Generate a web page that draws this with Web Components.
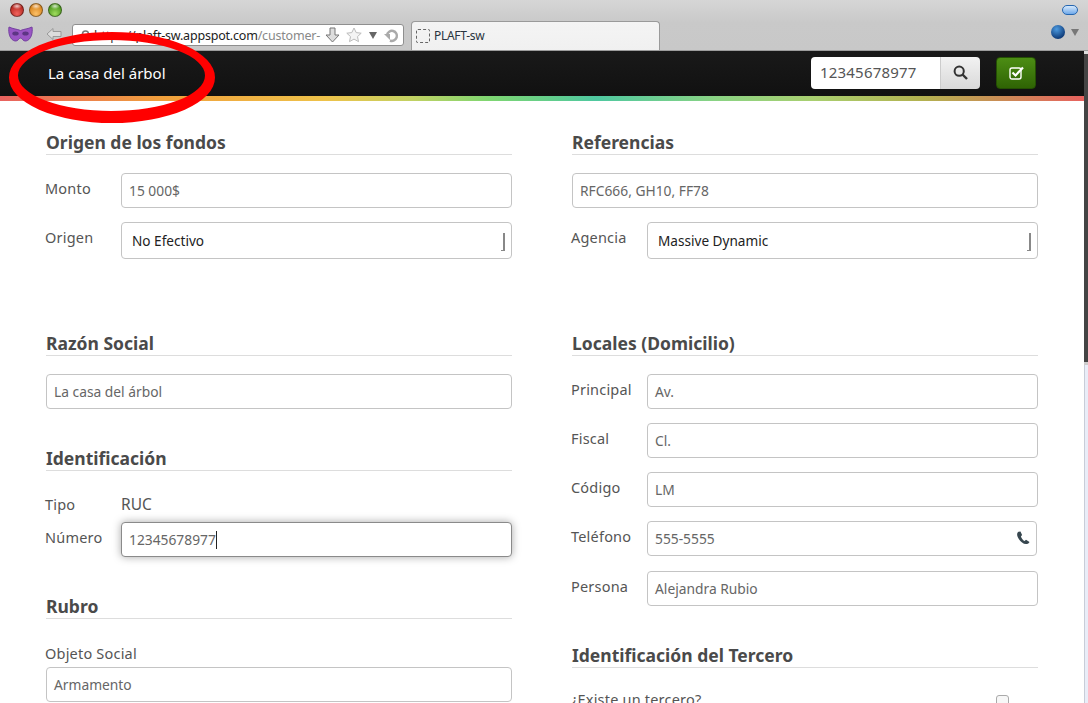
<!DOCTYPE html>
<html>
<head>
<meta charset="utf-8">
<title>PLAFT-sw</title>
<style>
  html, body { margin: 0; padding: 0; background: #fff; overflow: hidden; height: 703px; }
  body { font-family: "Noto Sans", "Open Sans", sans-serif; color: #555; }
</style>
</head>
<body>
<browser-chrome></browser-chrome>
<page-area>
<app-navbar title-text="La casa del árbol" search="12345678977"></app-navbar>
<form-page>
  <form-section slot="left" heading="Origen de los fondos">
    <form-field label="Monto" value="15 000$"></form-field>
    <form-field label="Origen" value="No Efectivo" kind="select"></form-field>
  </form-section>
  <form-section slot="right" heading="Referencias">
    <form-field value="RFC666, GH10, FF78"></form-field>
    <form-field label="Agencia" value="Massive Dynamic" kind="select"></form-field>
  </form-section>

  <form-section slot="left" heading="Razón Social" top="74">
    <form-field value="La casa del árbol"></form-field>
  </form-section>
  <form-section slot="left" heading="Identificación" top="39">
    <form-field label="Tipo" value="RUC" kind="static"></form-field>
    <form-field label="Número" value="12345678977" kind="focus"></form-field>
  </form-section>
  <form-section slot="left" heading="Rubro" top="39">
    <form-field label="Objeto Social" value="Armamento" kind="stacked"></form-field>
  </form-section>

  <form-section slot="right" heading="Locales (Domicilio)" top="74">
    <form-field label="Principal" value="Av."></form-field>
    <form-field label="Fiscal" value="Cl."></form-field>
    <form-field label="Código" value="LM"></form-field>
    <form-field label="Teléfono" value="555-5555" kind="phone"></form-field>
    <form-field label="Persona" value="Alejandra Rubio" style="margin-top:1px"></form-field>
  </form-section>
  <form-section slot="right" heading="Identificación del Tercero" top="39">
    <form-field label="¿Existe un tercero?" kind="check"></form-field>
  </form-section>
</form-page>
</page-area>
<red-mark></red-mark>

<script>
class BrowserChrome extends HTMLElement {
  constructor() {
    super();
    this.attachShadow({ mode: "open" });
    this.shadowRoot.innerHTML = `
    <style>
    :host { display:block; height:51px; box-sizing:border-box; background:linear-gradient(#d6d6d6,#c9c9c9 45%,#c8c8c8); border-bottom:1px solid #9c9c9c; overflow:hidden; font-family:"Noto Sans",sans-serif; }
    #lights { display:flex; gap:5px; height:21px; padding:3px 0 0 10px; box-sizing:border-box; align-items:flex-start; }
    #lights i { width:12px; height:12px; border-radius:50%; border:1px solid rgba(0,0,0,.4); box-sizing:content-box; }
    #row { display:flex; align-items:flex-start; height:30px; position:relative; }
    #mask { margin:4px 0 0 8px; width:25px; height:19px; }
    #back { margin:6px 0 0 13px; width:16px; height:14px; }
    #url { margin:3px 0 0 10px; width:332px; height:22px; box-sizing:border-box; background:#fff; border:1px solid #8f8f8f; border-radius:3px; display:flex; align-items:center; font-size:12.500px; padding-left:8px; white-space:nowrap; color:#333; letter-spacing:-.2px; position:relative; }
    #url span { color:#888; }
    #url b { font-weight:normal; flex:1; overflow:hidden; margin-left:4px; }
    #url svg { flex:none; }
    #tab { margin:0 0 0 7px; width:249px; height:30px; box-sizing:border-box; background:linear-gradient(#f4f4f4,#f0f0f0); border:1px solid #9a9a9a; border-bottom:0; border-radius:4px 4px 0 0; display:flex; align-items:center; gap:4px; padding:0 0 2px 4px; font-size:12px; color:#2a3440; letter-spacing:-.3px; }
    #tab i { width:12px; height:12px; border:1px dashed #666; border-radius:2px; }
    #end { margin-left:auto; display:flex; align-items:center; gap:6px; padding:4px 9px 0 0; }
    #pill { position:absolute; top:-16px; right:10px; width:14px; height:8px; border-radius:5px; border:1px solid #2566b0; background:linear-gradient(#d7e9fb,#6fa9ea); }
    #globe { width:14px; height:14px; border-radius:50%; background:radial-gradient(circle at 40% 30%,#4d9be0,#12407e 70%,#0c2a55); }
    #arrow { width:0; height:0; border:4px solid transparent; border-top:7px solid #777; border-bottom:0; }
    </style>
    <div id="lights">
      <i style="background:radial-gradient(ellipse 5px 3px at 50% 18%,rgba(255,255,255,.75),transparent),radial-gradient(circle at 50% 80%,#f0625c,#b82a22 70%)"></i>
      <i style="background:radial-gradient(ellipse 5px 3px at 50% 18%,rgba(255,255,255,.75),transparent),radial-gradient(circle at 50% 80%,#fbc068,#d9861f 70%)"></i>
      <i style="background:radial-gradient(ellipse 5px 3px at 50% 18%,rgba(255,255,255,.75),transparent),radial-gradient(circle at 50% 80%,#9fdc5e,#4f9a20 70%)"></i>
    </div>
    <div id="row">
      <svg id="mask" viewBox="0 0 25 19"><path d="M1 2c4 2 8 2 11.500 3.500C16 4 20 4 24 2c1 6-1 13-6 14-3 .5-4-3-5.500-3S10 16.500 7 16C2 15 0 8 1 2z" fill="#9a55c4" stroke="#7440a0"/><ellipse cx="7.500" cy="8.500" rx="3.200" ry="2" fill="#5e3585"/><ellipse cx="17.500" cy="8.500" rx="3.200" ry="2" fill="#5e3585"/></svg>
      <svg id="back" viewBox="0 0 16 14"><path d="M1 7l6-5.500V4.500h8v5H7v3z" fill="#ddd" stroke="#999"/></svg>
      <div id="url">
        <svg width="9" height="10" viewBox="0 0 9 10"><circle cx="4.500" cy="4" r="3" fill="none" stroke="#777" stroke-width="1.600"/><path d="M6.500 6.500L8.500 9.500" stroke="#777" stroke-width="1.600"/></svg>
        <b>https://<span style="color:#222">plaft-sw.appspot.com</span><span>/customer-</span></b>
        <svg width="15" height="16" viewBox="0 0 15 16" style="margin-right:6px"><path d="M5 1h5v7h4l-6.500 7L1 8h4z" fill="#ddd" stroke="#777"/></svg>
        <svg width="16" height="16" viewBox="0 0 16 16" style="margin-right:6px"><path d="M8 1l2.200 4.600 5 .6-3.700 3.400 1 5L8 12.100 3.500 14.600l1-5L.8 6.200l5-.6z" fill="#f4f4f4" stroke="#bbb"/></svg>
        <svg width="10" height="8" viewBox="0 0 10 8" style="margin-right:6px"><path d="M1 1h8L5 8z" fill="#666"/></svg>
        <svg width="15" height="15" viewBox="0 0 15 15" style="margin-right:4px"><path d="M3 7a5 5 0 1 1 3 5.500" fill="none" stroke="#aaa" stroke-width="2.500"/><path d="M0 6h6v6z" fill="#aaa"/></svg>
      </div>
      <div id="tab"><i></i><slot name="tab">PLAFT-sw</slot></div>
      <div id="end"><i id="globe"></i><i id="arrow"></i></div>
      <i id="pill"></i>
    </div>
    `;
  }
}

// content area plus the thin overlay-style scrollbar on its right side
class PageArea extends HTMLElement {
  constructor() {
    super();
    this.attachShadow({ mode: "open" });
    this.shadowRoot.innerHTML = `
    <style>
    :host { display:flex; height:652px; overflow:hidden; }
    #main { flex:1; min-width:0; }
    #track { width:4px; flex:none; display:flex; flex-direction:column; background:#e9edf8; box-shadow:inset 1px 0 0 #c8cdd8; }
    #thumb { height:314px; background:#444; border-top:3px solid #ddd; border-bottom:3px solid #ccc; box-sizing:border-box; }
    </style>
    <div id="main"><slot></slot></div>
    <div id="track"><div id="thumb"></div></div>
    `;
  }
}

class AppNavbar extends HTMLElement {
  constructor() {
    super();
    this.attachShadow({ mode: "open" });
    this.shadowRoot.innerHTML = `
    <style>
    :host { display:block; font-family:"Noto Sans",sans-serif; }
    #bar { height:45px; background:linear-gradient(#191919,#111); display:flex; align-items:center; padding:0 48px 0 48px; box-sizing:border-box; }
    #brand { color:#fff; font-size:15px; margin-top:-1px; }
    #search { margin-left:auto; display:flex; height:32px; margin-top:-2px; }
    #q { width:130px; box-sizing:border-box; background:#fff; border-radius:4px 0 0 4px; font-size:15px; color:#555; padding-left:9px; line-height:31px; letter-spacing:.2px; border-right:1px solid #ccc; }
    #go { width:39px; background:linear-gradient(#f2f2f2,#d9d9d9); border-radius:0 4px 4px 0; display:flex; align-items:center; justify-content:center; }
    #ok { width:40px; height:32px; margin-left:16px; margin-top:-2px; box-sizing:border-box; background:linear-gradient(#4c8d14,#2f6404); border:1px solid #245003; border-radius:4px; display:flex; align-items:center; justify-content:center; }
    #rainbow { height:5px; background:linear-gradient(90deg,#e8625f 0,#f0a03c 15%,#eec24a 30%,#c2d163 38%,#7fd671 45%,#4fc8a0 55%,#8ad384 66%,#a9cf70 75%,#b3b250 85%,#c98e55 92%,#e8625f 100%); }
    </style>
    <div id="bar">
      <div id="brand"></div>
      <div id="search"><div id="q"></div><div id="go">
        <svg width="15" height="15" viewBox="0 0 15 15"><circle cx="6.200" cy="6.200" r="4.600" fill="none" stroke="#333" stroke-width="2"/><path d="M9.500 9.500L14 14" stroke="#333" stroke-width="2.400"/></svg>
      </div></div>
      <div id="ok">
        <svg width="15" height="14" viewBox="0 0 15 14"><rect x="1" y="2" width="11" height="11" rx="2" fill="none" stroke="#fff" stroke-width="1.400"/><path d="M3.500 6.500l3 3L14 1.500" fill="none" stroke="#fff" stroke-width="2.200"/></svg>
      </div>
    </div>
    <div id="rainbow"></div>
    `;
  }
  connectedCallback() {
    this.shadowRoot.querySelector("#brand").textContent = this.getAttribute("title-text");
    this.shadowRoot.querySelector("#q").textContent = this.getAttribute("search");
  }
}

class FormPage extends HTMLElement {
  constructor() {
    super();
    this.attachShadow({ mode: "open" });
    this.shadowRoot.innerHTML = `
    <style>
    :host { display:block; }
    #wrap { display:grid; grid-template-columns:466px 466px; column-gap:60px; padding:31px 0 0 46px; align-items:start; }
    .col { display:flex; flex-direction:column; }
    </style>
    <div id="wrap">
      <div class="col"><slot name="left"></slot></div>
      <div class="col"><slot name="right"></slot></div>
    </div>
    `;
  }
}

class FormSection extends HTMLElement {
  constructor() {
    super();
    this.attachShadow({ mode: "open" });
    this.shadowRoot.innerHTML = `
    <style>
    :host { display:block; }
    h2 { margin:0 0 18px; height:22px; line-height:21px; font-size:17.500px; font-weight:700; color:#4a4a4a; border-bottom:1px solid #ddd; }
    #body { display:flex; flex-direction:column; gap:14px; }
    </style>
    <h2></h2>
    <div id="body"><slot></slot></div>
    `;
  }
  connectedCallback() {
    this.shadowRoot.querySelector("h2").textContent = this.getAttribute("heading");
    if (this.hasAttribute("top")) this.style.marginTop = this.getAttribute("top") + "px";
  }
}

class FormField extends HTMLElement {
  constructor() {
    super();
    this.attachShadow({ mode: "open" });
    this.shadowRoot.innerHTML = `
    <style>
    :host { display:flex; align-items:flex-start; font-size:14.500px; }
    label { width:75px; flex:none; margin-left:-1px; margin-right:1px; line-height:18px; padding-top:6px; color:#555; letter-spacing:.2px; white-space:nowrap; }
    #box { flex:1; height:35px; box-sizing:border-box; border:1px solid #c4c4c4; border-radius:4px; padding:0 7px; display:flex; align-items:center; color:#666; font-size:13.800px; background:#fff; position:relative; }
    :host([kind="select"]) #box { height:37px; color:#222; padding-left:10px; font-size:13.600px; }
    :host([kind="select"]) #box::after { content:""; position:absolute; right:6px; top:10px; width:4px; height:18px; border-right:2px solid #888; border-bottom:1px solid #888; box-sizing:border-box; }
    :host([kind="focus"]) #box { border-color:#8a8a8a; box-shadow:0 0 9px rgba(0,0,0,.35); }
    :host([kind="focus"]) #box span { border-right:1px solid #222; height:18px; line-height:18px; }
    :host([kind="static"]) { height:24px; margin-bottom:-5px; }
    :host([kind="static"]) #box { border:0; padding:0; align-items:flex-start; height:auto; font-size:15.500px; line-height:20px; color:#555; padding-top:5px; }
    :host([kind="phone"]) #box { margin-right:1px; }
    :host([kind="phone"]) svg { display:block; }
    :host([kind="stacked"]) { display:block; }
    :host([kind="stacked"]) label { display:block; width:auto; padding:7px 0 5px; }
    :host([kind="check"]) label { width:auto; padding-top:4px; }
    :host([kind="check"]) #box { border:0; padding:0; height:auto; }
    :host([kind="check"]) #box i { position:absolute; right:29px; top:9px; width:13px; height:13px; border:1px solid #aaa; border-radius:3px; background:#f7f7f7; box-sizing:border-box; }
    svg { display:none; position:absolute; right:6px; top:9px; }
    </style>
    <label></label>
    <div id="box"><span></span>
      <svg width="14" height="14" viewBox="0 0 14 14"><path d="M2.500.800C.500 2 .800 5 2.800 8c2 3 5 5.500 8 5 1.500-.3 2.500-1.300 2.700-2L10 8.800 8.600 10c-1.200-.3-3.300-3-3.700-4.500L6.100 4 4.500.500z" fill="#37474f"/></svg>
    </div>
    `;
  }
  connectedCallback() {
    const root = this.shadowRoot;
    const labelText = this.getAttribute("label");
    if (labelText) root.querySelector("label").textContent = labelText;
    else root.querySelector("label").remove();
    root.querySelector("span").textContent = this.getAttribute("value") || "";
    if (this.getAttribute("kind") === "check") root.querySelector("#box").append(document.createElement("i"));
  }
}

// the hand-drawn circle sits over the header, so it gets placed on top
class RedMark extends HTMLElement {
  constructor() {
    super();
    this.attachShadow({ mode: "open" });
    this.shadowRoot.innerHTML = `
    <style>
    :host { position:absolute; left:0; top:0; width:230px; height:130px; pointer-events:none; }
    </style>
    <svg width="230" height="130" viewBox="0 0 230 130"><path fill="#f00" fill-rule="evenodd" d="M9 77.500a103 45.500 0 1 0 206 0a103 45.500 0 1 0-206 0zM18 75.500a93.500 35.500 0 1 0 187 0a93.500 35.500 0 1 0-187 0z"/></svg>
    `;
  }
}

window.customElements.define("browser-chrome", BrowserChrome);
window.customElements.define("page-area", PageArea);
window.customElements.define("app-navbar", AppNavbar);
window.customElements.define("form-page", FormPage);
window.customElements.define("form-section", FormSection);
window.customElements.define("form-field", FormField);
window.customElements.define("red-mark", RedMark);
</script>
</body>
</html>
